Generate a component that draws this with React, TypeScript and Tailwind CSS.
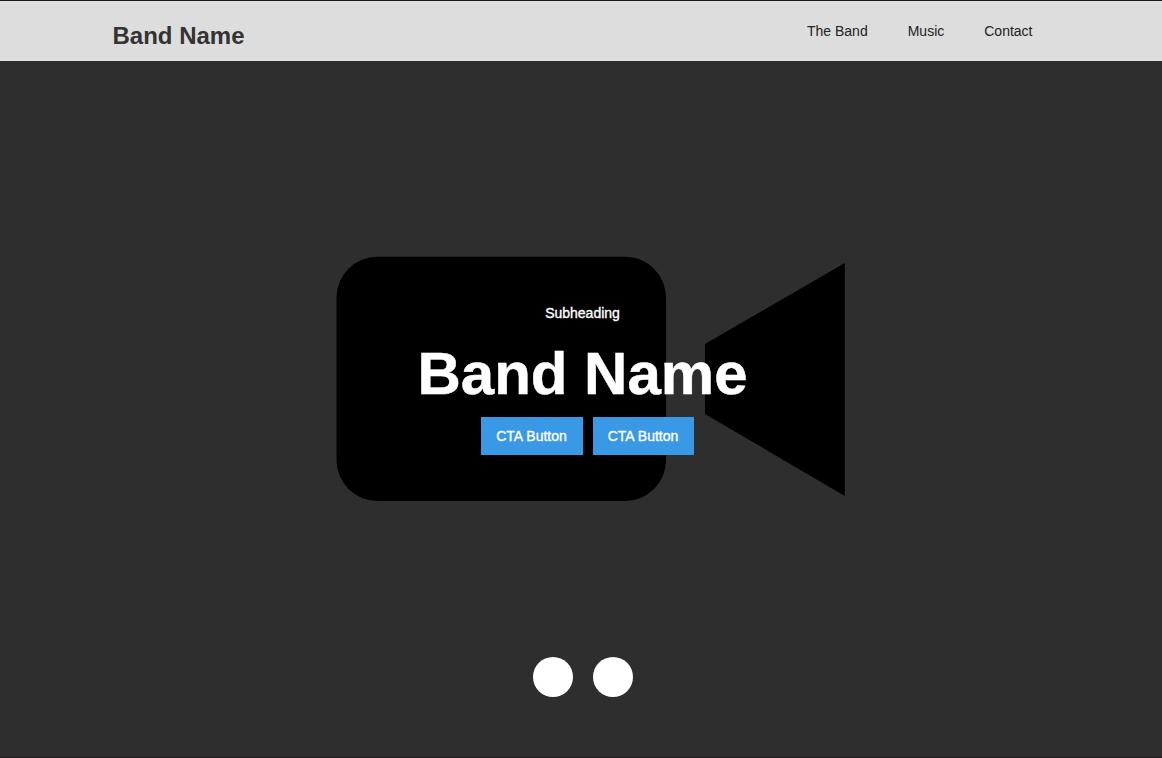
const links = ["The Band", "Music", "Contact"];

export default function App() {
  return (
    <div className="flex h-[758px] w-[1162px] flex-col border-y border-[#1b171b] bg-[#2e2e2e] font-['Liberation_Sans',Arial,sans-serif] antialiased">
      <header className="flex h-[60px] shrink-0 justify-between bg-[#dddddd] pr-[129.5px] pl-[112.5px]">
        <h1 className="pt-[18px] text-[24px] leading-[34px] font-bold text-[#333333]">Band Name</h1>
        <nav className="flex gap-10 pt-5 text-[14px] leading-[20px] text-[#222222]">
          {links.map((link) => (
            <a key={link} href="#">{link}</a>
          ))}
        </nav>
      </header>
      <main className="relative flex min-h-0 grow flex-col items-center">
        <svg className="absolute top-[195px] left-[336px]" width="510" height="246" viewBox="336 256 510 246">
          <rect x="336.5" y="256.7" width="329.5" height="244.3" rx="41" />
          <path d="M844.8 263 L705 344 V414 L844.8 496 Z" />
        </svg>
        <section className="relative flex flex-col items-center pt-[242px] pl-[3px] text-white">
          <p className="text-[14px] leading-[20px] [-webkit-text-stroke:0.35px_white]">Subheading</p>
          <h2 className="mt-[14px] text-[60px] leading-[74px] font-bold [-webkit-text-stroke:0.5px_white]">Band Name</h2>
          <div className="mt-[6px] flex gap-[10px] pl-[10px]">
            <button className="h-[38px] w-[102px] bg-[#3a99e5] pr-px text-[14px] [-webkit-text-stroke:0.35px_white]">CTA Button</button>
            <button className="h-[38px] w-[101px] bg-[#3a99e5] pr-px text-[14px] [-webkit-text-stroke:0.35px_white]">CTA Button</button>
          </div>
        </section>
        <div className="mt-[202px] flex gap-5 pl-1">
          <span className="size-10 rounded-full bg-white" />
          <span className="size-10 rounded-full bg-white" />
        </div>
      </main>
    </div>
  );
}
